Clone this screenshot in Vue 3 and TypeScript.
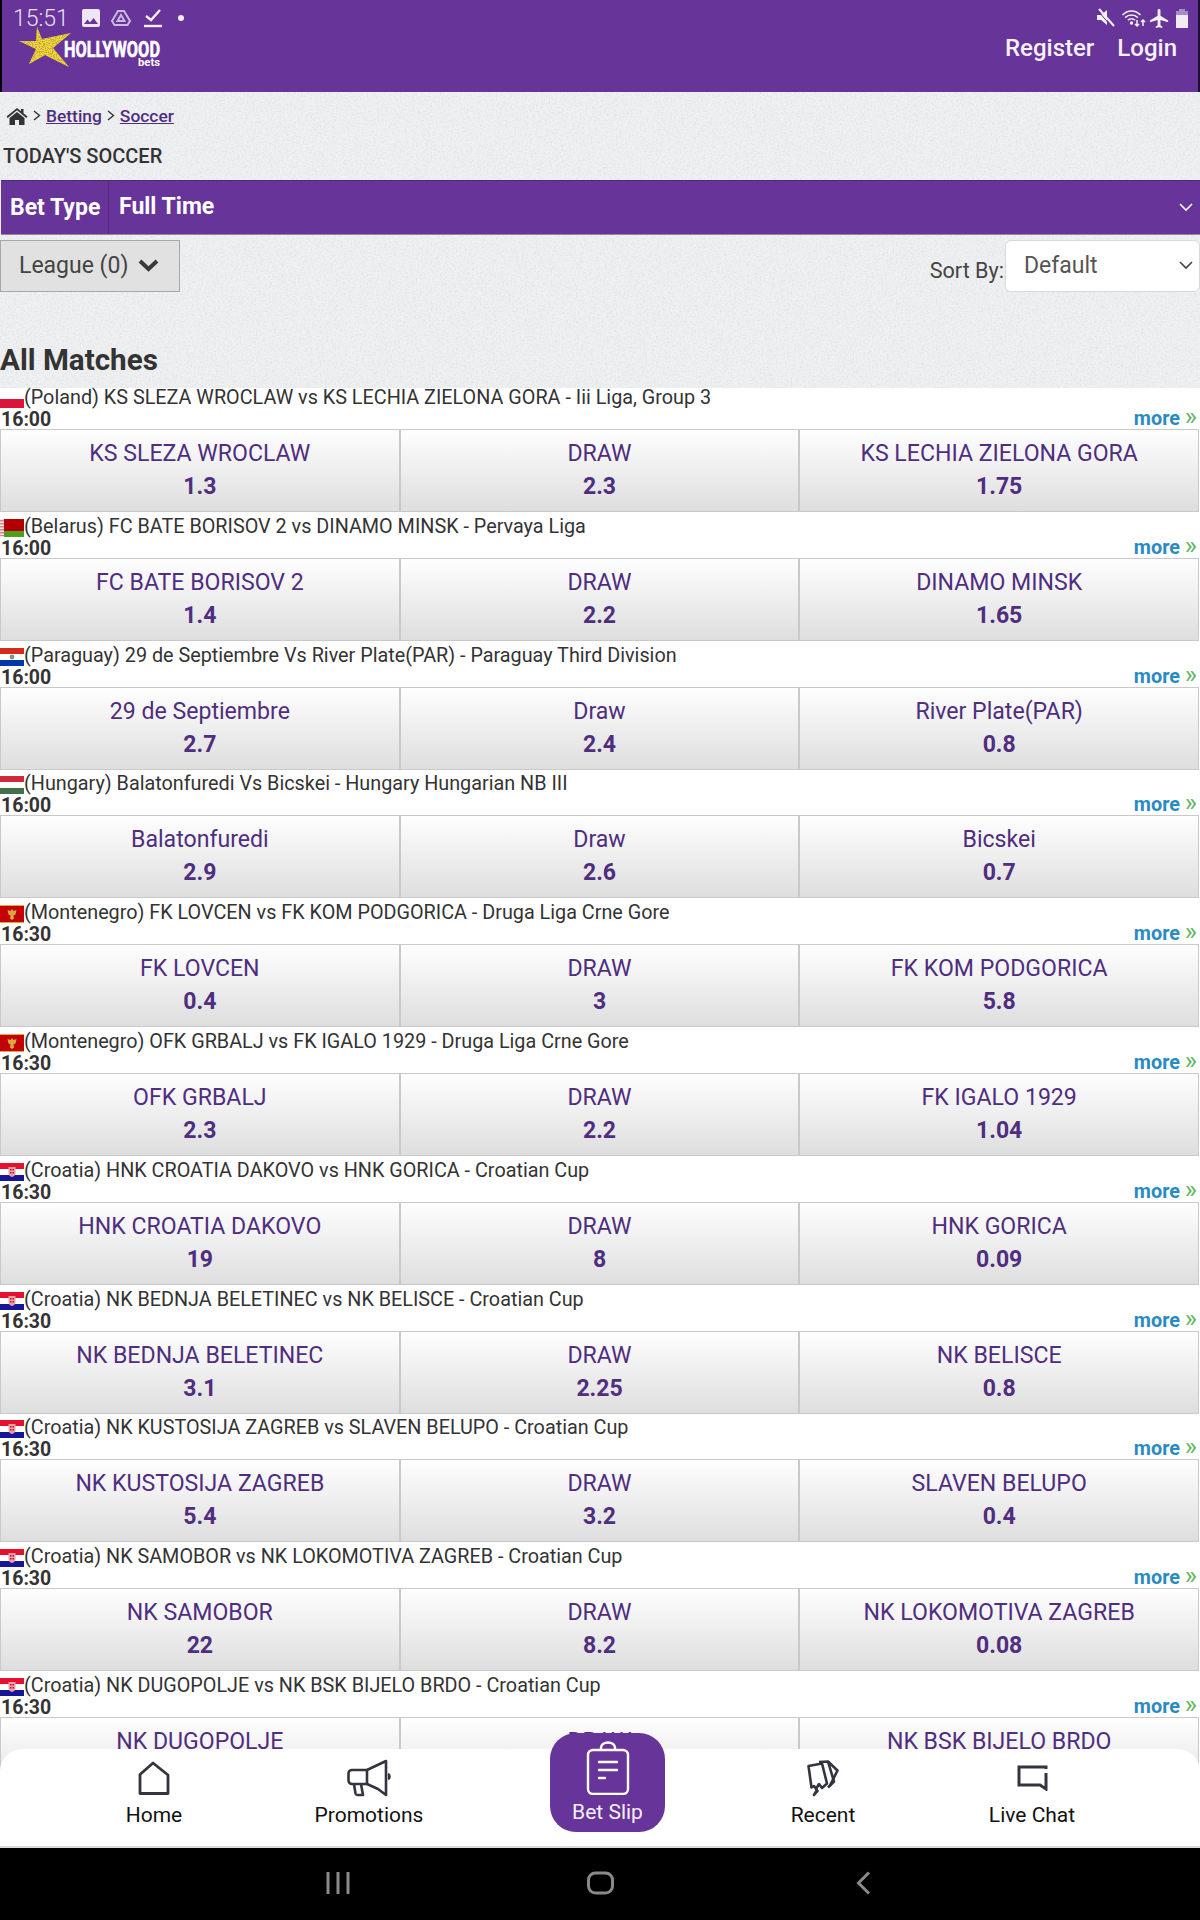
<script setup lang="ts">
interface Stripe { y: number; h: number; fill: string }
interface Match {
  country: string
  title: string
  time: string
  home: string
  draw: string
  away: string
  odds: [string, string, string]
}

const flags: Record<string, Stripe[]> = {
  Poland: [{ y: 0, h: 9, fill: '#ffffff' }, { y: 9, h: 9, fill: '#dc143c' }],
  Belarus: [{ y: 0, h: 12, fill: '#b20000' }, { y: 12, h: 6, fill: '#4f9e1f' }],
  Paraguay: [{ y: 0, h: 6, fill: '#d52b1e' }, { y: 6, h: 6, fill: '#ffffff' }, { y: 12, h: 6, fill: '#0038a8' }],
  Hungary: [{ y: 0, h: 6, fill: '#cd2a3e' }, { y: 6, h: 6, fill: '#ffffff' }, { y: 12, h: 6, fill: '#436f4d' }],
  Montenegro: [{ y: 0, h: 18, fill: '#d4af3a' }, { y: 1, h: 16, fill: '#c40308' }],
  Croatia: [{ y: 0, h: 6, fill: '#e8112d' }, { y: 6, h: 6, fill: '#ffffff' }, { y: 12, h: 6, fill: '#171796' }]
}

const matches: Match[] = [
  { country: 'Poland', title: 'KS SLEZA WROCLAW vs KS LECHIA ZIELONA GORA - Iii Liga, Group 3', time: '16:00', home: 'KS SLEZA WROCLAW', draw: 'DRAW', away: 'KS LECHIA ZIELONA GORA', odds: ['1.3', '2.3', '1.75'] },
  { country: 'Belarus', title: 'FC BATE BORISOV 2 vs DINAMO MINSK - Pervaya Liga', time: '16:00', home: 'FC BATE BORISOV 2', draw: 'DRAW', away: 'DINAMO MINSK', odds: ['1.4', '2.2', '1.65'] },
  { country: 'Paraguay', title: '29 de Septiembre Vs River Plate(PAR) - Paraguay Third Division', time: '16:00', home: '29 de Septiembre', draw: 'Draw', away: 'River Plate(PAR)', odds: ['2.7', '2.4', '0.8'] },
  { country: 'Hungary', title: 'Balatonfuredi Vs Bicskei - Hungary Hungarian NB III', time: '16:00', home: 'Balatonfuredi', draw: 'Draw', away: 'Bicskei', odds: ['2.9', '2.6', '0.7'] },
  { country: 'Montenegro', title: 'FK LOVCEN vs FK KOM PODGORICA - Druga Liga Crne Gore', time: '16:30', home: 'FK LOVCEN', draw: 'DRAW', away: 'FK KOM PODGORICA', odds: ['0.4', '3', '5.8'] },
  { country: 'Montenegro', title: 'OFK GRBALJ vs FK IGALO 1929 - Druga Liga Crne Gore', time: '16:30', home: 'OFK GRBALJ', draw: 'DRAW', away: 'FK IGALO 1929', odds: ['2.3', '2.2', '1.04'] },
  { country: 'Croatia', title: 'HNK CROATIA DAKOVO vs HNK GORICA - Croatian Cup', time: '16:30', home: 'HNK CROATIA DAKOVO', draw: 'DRAW', away: 'HNK GORICA', odds: ['19', '8', '0.09'] },
  { country: 'Croatia', title: 'NK BEDNJA BELETINEC vs NK BELISCE - Croatian Cup', time: '16:30', home: 'NK BEDNJA BELETINEC', draw: 'DRAW', away: 'NK BELISCE', odds: ['3.1', '2.25', '0.8'] },
  { country: 'Croatia', title: 'NK KUSTOSIJA ZAGREB vs SLAVEN BELUPO - Croatian Cup', time: '16:30', home: 'NK KUSTOSIJA ZAGREB', draw: 'DRAW', away: 'SLAVEN BELUPO', odds: ['5.4', '3.2', '0.4'] },
  { country: 'Croatia', title: 'NK SAMOBOR vs NK LOKOMOTIVA ZAGREB - Croatian Cup', time: '16:30', home: 'NK SAMOBOR', draw: 'DRAW', away: 'NK LOKOMOTIVA ZAGREB', odds: ['22', '8.2', '0.08'] },
  { country: 'Croatia', title: 'NK DUGOPOLJE vs NK BSK BIJELO BRDO - Croatian Cup', time: '16:30', home: 'NK DUGOPOLJE', draw: 'DRAW', away: 'NK BSK BIJELO BRDO', odds: ['', '', ''] }
]
</script>

<template>
  <div class="page">
    <svg class="texture" width="1200" height="388" aria-hidden="true">
      <filter id="paper" x="0" y="0" width="100%" height="100%">
        <feTurbulence type="fractalNoise" baseFrequency="0.55" numOctaves="3" seed="4" />
        <feColorMatrix type="matrix" values="0 0 0 0 0.7  0 0 0 0 0.71  0 0 0 0 0.73  0 0 0 1.4 -0.6" />
      </filter>
      <rect width="1200" height="388" filter="url(#paper)" />
    </svg>

    <header class="header">
      <div class="status">
        <div class="status-left">
          <span class="clock">15:51</span>
          <svg width="24" height="24" viewBox="0 0 24 24">
            <path fill-rule="evenodd" d="M21 19V5a2 2 0 0 0-2-2H5a2 2 0 0 0-2 2v14a2 2 0 0 0 2 2h14a2 2 0 0 0 2-2zM8.500 13.500l2.500 3 3.500-4.500 4.500 6H5z" fill="#eee6f5" />
          </svg>
          <svg width="22" height="20" viewBox="0 0 22 20" fill="none" stroke="#cdb9e0" stroke-width="2">
            <path d="M8 3h6l6 10-2.500 4h-13L2 13z" />
            <path d="M11 7l3.500 6h-7z" />
          </svg>
          <svg class="st-check" width="18" height="20" viewBox="0 0 18 20" fill="none" stroke="#f4eff8" stroke-width="2.400">
            <path d="M2 8l5 4 9-10" />
            <path d="M0 18h18" />
          </svg>
          <span class="st-dot"></span>
        </div>
        <div class="status-right">
          <svg width="20" height="20" viewBox="0 0 20 20">
            <path d="M1 7h4l6-5v15l-6-5H1z" fill="#f4eff8" />
            <path d="M3 1l15 17" stroke="#f4eff8" stroke-width="2" />
            <path d="M3 1l15 17" stroke="#67349a" stroke-width="1" transform="translate(-1.600 1.400)" />
          </svg>
          <svg width="26" height="20" viewBox="0 0 25 20" fill="none" stroke="#f4eff8" stroke-width="1.500">
            <path d="M1 7c5-5.500 13-5.500 18 0" />
            <path d="M3.600 9.600c3.600-3.600 9.200-3.600 12.800 0" />
            <path d="M6.400 12.200c2-2 5.200-2 7.200 0" />
            <circle cx="10" cy="15" r="1" fill="#f4eff8" />
            <path d="M15.500 12v6m-2-2l2 2 2-2M21.500 18v-6m-2 2l2-2 2 2" />
          </svg>
          <svg class="st-plane" width="23" height="23" viewBox="0 0 24 24">
            <path d="M21 16v-2l-8-5V3.500a1.500 1.500 0 0 0-3 0V9l-8 5v2l8-2.500V19l-2 1.500V22l3.500-1 3.500 1v-1.500L13 19v-5.500z" fill="#f4eff8" />
          </svg>
          <svg width="12" height="19" viewBox="0 0 12 19">
            <rect x="3" y="0" width="6" height="3" fill="#a78cc4" />
            <rect x="0" y="2" width="12" height="4" fill="#a78cc4" />
            <rect x="0" y="6" width="12" height="13" fill="#f1ebf6" />
          </svg>
        </div>
      </div>
      <div class="brand-row">
        <svg class="logo" width="200" height="44" viewBox="0 0 200 44">
          <defs>
            <filter id="speckle" x="0" y="0" width="100%" height="100%">
              <feTurbulence type="fractalNoise" baseFrequency="0.9" numOctaves="2" seed="7" result="n" />
              <feColorMatrix in="n" type="matrix" values="0 0 0 0 0.5  0 0 0 0 0.38  0 0 0 0 0.08  0 0 0 6 -2.7" result="dots" />
              <feComposite in="dots" in2="SourceGraphic" operator="in" result="clip" />
              <feMerge>
                <feMergeNode in="SourceGraphic" />
                <feMergeNode in="clip" />
              </feMerge>
            </filter>
          </defs>
          <polygon points="18,0 23,12 52,6 34,21 50,40 26,28 10,37 17,22 0,14 17,14" fill="#f6d92a" filter="url(#speckle)" />
          <text x="45" y="29.500" class="logo-main" textLength="96" lengthAdjust="spacingAndGlyphs">HOLLYWOOD</text>
          <text x="119" y="38.500" class="logo-sub" textLength="22" lengthAdjust="spacingAndGlyphs">bets</text>
        </svg>
        <nav class="auth">
          <a>Register</a>
          <a>Login</a>
        </nav>
      </div>
    </header>

    <main class="content">
      <div class="crumbs">
        <svg class="crumb-home" width="22" height="18" viewBox="0 0 22 18">
          <path d="M11 1L0.500 9.500l1.200 1.400L11 3.300l9.300 7.600 1.200-1.400-4-3.200V2h-2.500v2.300z" fill="#333" />
          <path d="M11 5L3.500 11v7h5.500v-5h4v5h5.500v-7z" fill="#333" />
        </svg>
        <svg width="8" height="14" viewBox="0 0 8 14" fill="none" stroke="#333" stroke-width="1.400"><path d="M1 2l5.500 4.500L1 11" /></svg>
        <a class="crumb-link">Betting</a>
        <svg width="8" height="14" viewBox="0 0 8 14" fill="none" stroke="#333" stroke-width="1.400"><path d="M1 2l5.500 4.500L1 11" /></svg>
        <a class="crumb-link">Soccer</a>
      </div>

      <h2 class="today">TODAY'S SOCCER</h2>

      <div class="bet-type">
        <span class="bet-type-label">Bet Type</span>
        <span class="bet-type-value">Full Time</span>
        <svg width="14" height="9" viewBox="0 0 14 9" fill="none" stroke="#fff" stroke-width="1.600"><path d="M1 1l6 6 6-6" /></svg>
      </div>

      <div class="filters">
        <button class="league">
          League (0)
          <svg width="21" height="14" viewBox="0 0 21 14" fill="none" stroke="#3a3a3a" stroke-width="4"><path d="M2 3l8.500 8L19 3" /></svg>
        </button>
        <div class="sort">
          <span class="sort-label">Sort By:</span>
          <div class="sort-select">
            Default
            <svg width="14" height="9" viewBox="0 0 14 9" fill="none" stroke="#444" stroke-width="1.600"><path d="M1 1l6 6 6-6" /></svg>
          </div>
        </div>
      </div>

      <h1 class="all">All Matches</h1>

      <section class="list">
        <article v-for="m in matches" :key="m.title" class="match">
          <div class="title-line">
            <svg class="flag" width="24" height="18" viewBox="0 0 24 18">
              <rect v-for="s in flags[m.country]" :key="s.y" x="0" :y="s.y" width="24" :height="s.h" :fill="s.fill" />
              <template v-if="m.country === 'Belarus'">
                <rect width="4" height="18" fill="#f3e9e9" />
                <path d="M1 1v16M3 1v16" stroke="#c0202a" stroke-width="1" stroke-dasharray="1.500 1.500" />
              </template>
              <circle v-if="m.country === 'Paraguay'" cx="12" cy="9" r="2.400" fill="#7d9a86" />
              <path v-if="m.country === 'Montenegro'" d="M12 4l1.500 2 3-1-1 4.500-2 1 .5 3-2 1.500-2-1.500.5-3-2-1-1-4.500 3 1z" fill="#d9a93c" />
              <template v-if="m.country === 'Croatia'">
                <path d="M8.500 4h7v6.500c0 2-1.800 3-3.500 3.500-1.700-.5-3.500-1.500-3.500-3.500z" fill="#e8a0a8" />
                <path d="M10 6h1.500v1.500H10zm2.500 0H14v1.500h-1.500zM10 9h1.500v1.500H10zm2.500 0H14v1.500h-1.500z" fill="#c8102e" />
              </template>
            </svg>
            <span class="title-text">({{ m.country }}) {{ m.title }}</span>
          </div>
          <div class="time-line">
            <span class="time">{{ m.time }}</span>
            <a class="more">more <span class="more-arrows">»</span></a>
          </div>
          <div class="odds-row">
            <div class="odd">
              <span class="odd-name">{{ m.home }}</span>
              <span class="odd-value">{{ m.odds[0] }}</span>
            </div>
            <div class="odd">
              <span class="odd-name">{{ m.draw }}</span>
              <span class="odd-value">{{ m.odds[1] }}</span>
            </div>
            <div class="odd">
              <span class="odd-name">{{ m.away }}</span>
              <span class="odd-value">{{ m.odds[2] }}</span>
            </div>
          </div>
        </article>
      </section>
    </main>

    <nav class="tabs">
      <a class="tab tab-home">
        <svg width="32" height="34" viewBox="0 0 32 34" fill="none" stroke="#33343f" stroke-width="2.800" stroke-linejoin="round">
          <path d="M2 13.500L15 2l15 12v18.500H2z" />
        </svg>
        <span>Home</span>
      </a>
      <a class="tab tab-promo">
        <svg width="44" height="38" viewBox="0 0 44 38" fill="none" stroke="#33343f" stroke-width="2.600" stroke-linejoin="round">
          <path d="M20 11H5a3.500 3.500 0 0 0-3.500 3.500v7A3.500 3.500 0 0 0 5 25h15z" />
          <path d="M20 11L39 2v34L31 30 20 25" />
          <path d="M41 15c2 1 2 4 0 5" fill="#33343f" />
          <path d="M7 25l1.500 9.500a2 2 0 0 0 2 1.500h5.500l-2-11" />
        </svg>
        <span>Promotions</span>
      </a>
      <a class="tab tab-slip">
        <svg width="44" height="54" viewBox="0 0 44 54" fill="none" stroke="#fff" stroke-width="2.400">
          <rect x="2" y="9" width="40" height="44" rx="5" />
          <path d="M15 9V6.500a7 5 0 0 1 14 0V9" />
          <path d="M12 21h20M12 29h20" />
          <path d="M12 37h8" />
        </svg>
        <span>Bet Slip</span>
      </a>
      <a class="tab tab-recent">
        <svg width="32" height="37" viewBox="0 0 32 37" fill="none" stroke="#33343f" stroke-width="2.600" stroke-linejoin="round">
          <path d="M1.500 6L15 3.500l5 20-5 4.500-3-4-3 5 1.500 2L7 35l3-5-3-4-2.500 1.500z" />
          <path d="M12 2l9-.5 6 20-6 6" />
          <path d="M21 1.500l9.500 9-8 16" />
        </svg>
        <span>Recent</span>
      </a>
      <a class="tab tab-chat">
        <svg width="31" height="26" viewBox="0 0 31 26" fill="none" stroke="#33343f" stroke-width="3" stroke-linejoin="miter">
          <path d="M29 4V2H2v18h21l6 4V8" />
        </svg>
        <span>Live Chat</span>
      </a>
    </nav>

    <footer class="android-nav">
      <svg width="24" height="24" viewBox="0 0 24 24" fill="none" stroke="#8a8a8a" stroke-width="3"><path d="M2 1v22M12 1v22M22 1v22" /></svg>
      <svg width="27" height="24" viewBox="0 0 27 24" fill="none" stroke="#8a8a8a" stroke-width="3"><rect x="1.500" y="2" width="24" height="20" rx="7" /></svg>
      <svg class="nav-back" width="15" height="24" viewBox="0 0 15 24" fill="none" stroke="#8a8a8a" stroke-width="3"><path d="M13 1.500L2.500 12 13 22.500" /></svg>
    </footer>
  </div>
</template>

<style>
html, body { margin: 0; background: #000; }
</style>

<style scoped>
.page {
  position: relative;
  width: 1200px;
  height: 1920px;
  overflow: hidden;
  display: flex;
  flex-direction: column;
  background: #eff0f1;
  font-family: Roboto, "Liberation Sans", sans-serif;
  color: #333;
}
.texture {
  position: absolute;
  left: 0;
  top: 0;
}
.header {
  position: relative;
  flex: none;
  height: 92px;
  background: #67349a;
  border-left: 2px solid #000;
  border-right: 2px solid #1c1030;
  box-sizing: border-box;
}
.status {
  height: 27px;
  display: flex;
  justify-content: space-between;
  align-items: center;
  padding: 9px 10px 0 11px;
  box-sizing: border-box;
}
.status-left, .status-right { display: flex; align-items: center; }
.status-left { gap: 7px; }
.status-right { gap: 5px; }
.clock {
  font-size: 23px;
  font-weight: 300;
  color: #e9e0f1;
  margin-right: 3px;
}
.st-check { margin-left: 5px; }
.st-plane { margin-left: -4px; }
.st-dot {
  width: 6px;
  height: 6px;
  margin-left: 9px;
  border-radius: 50%;
  background: #f4eff8;
}
.brand-row {
  display: flex;
  justify-content: space-between;
  padding-left: 17px;
  padding-right: 21px;
}
.logo { display: block; }
.logo-main {
  font: 700 22px Roboto, sans-serif;
  fill: #fff;
  stroke: #fff;
  stroke-width: 0.6px;
}
.logo-sub { font: 700 11px Roboto, sans-serif; fill: #fff; }
.auth {
  display: flex;
  gap: 23px;
  font-size: 24px;
  font-weight: 500;
  color: #f5f0f9;
  padding-top: 7px;
}
.content {
  position: relative;
  flex: 1;
  min-height: 0;
  overflow: hidden;
}
.crumbs {
  height: 47px;
  display: flex;
  align-items: center;
  padding-left: 6px;
  gap: 4px;
}
.crumb-home { margin-right: 1px; }
.crumb-link {
  font-size: 17.4px;
  font-weight: 500;
  color: #4f2d7f;
  text-decoration: underline;
  margin-left: 1px;
  margin-right: 1px;
}
.today {
  margin: 0;
  padding-left: 3px;
  height: 41px;
  line-height: 34px;
  font-size: 20px;
  font-weight: 500;
  color: #333;
}
.bet-type {
  height: 55px;
  margin-left: 1px;
  display: flex;
  align-items: center;
  background: #67349a;
  border-top: 1px solid #4e2a75;
  border-bottom: 1px solid #8d8d99;
  box-sizing: border-box;
  color: #fff;
  padding-right: 7px;
}
.bet-type-label {
  align-self: stretch;
  display: flex;
  align-items: center;
  width: 108px;
  box-sizing: border-box;
  padding-left: 9px;
  font-size: 23px;
  font-weight: 700;
  border-right: 1px solid #55297f;
}
.bet-type-value {
  flex: 1;
  padding-left: 10px;
  font-size: 23px;
  font-weight: 700;
  padding-bottom: 2px;
}
.filters {
  display: flex;
  justify-content: space-between;
  margin-top: 5px;
  height: 52px;
}
.league {
  width: 180px;
  height: 52px;
  box-sizing: border-box;
  background: #e1e1e1;
  border: 1px solid #a8a8a8;
  display: flex;
  align-items: center;
  gap: 10px;
  padding: 0 0 2px 18px;
  font: 400 23px Roboto, sans-serif;
  color: #444;
}
.sort {
  display: flex;
  align-items: center;
}
.sort-label {
  font-size: 21.6px;
  color: #444;
  padding-top: 9px;
  margin-right: 1px;
}
.sort-select {
  width: 195px;
  height: 52px;
  box-sizing: border-box;
  background: #fff;
  border: 1px solid #d8d8d8;
  border-radius: 6px;
  display: flex;
  align-items: center;
  justify-content: space-between;
  padding: 0 6px 2px 18px;
  font-size: 23px;
  color: #555;
}
.all {
  margin: 0;
  height: 96px;
  padding-top: 52px;
  box-sizing: border-box;
  font-size: 29.6px;
  font-weight: 700;
  line-height: 32px;
  color: #333;
}
.list { background: #fff; }
.match { height: 128.8px; }
.title-line {
  height: 20px;
  display: flex;
  align-items: flex-start;
}
.flag {
  flex: none;
  margin-top: 2px;
}
.title-text {
  font-size: 19.8px;
  line-height: 21px;
  margin-top: -1px;
  color: #333;
  white-space: nowrap;
}
.time-line {
  height: 21px;
  display: flex;
  justify-content: space-between;
  align-items: flex-end;
  line-height: 21px;
  padding-left: 1px;
  padding-right: 3px;
}
.time {
  font-size: 19.5px;
  line-height: 19px;
  font-weight: 700;
  color: #333;
}
.more {
  font-size: 19.8px;
  font-weight: 700;
  color: #2a8bc2;
}
.more-arrows {
  color: #62b55f;
  font-weight: 400;
  font-size: 26px;
  line-height: 0;
}
.odds-row {
  display: flex;
  padding-right: 1px;
}
.odd {
  flex: 1;
  height: 83px;
  box-sizing: border-box;
  border: 1px solid #c9c9c9;
  border-left-width: 1.500px;
  background: linear-gradient(#fefefe, #dedede);
  display: flex;
  flex-direction: column;
  align-items: center;
  color: #4f2d7f;
  padding-top: 10px;
}
.odd-name {
  font-size: 23.1px;
  line-height: 28px;
  white-space: nowrap;
}
.odd-value {
  margin-top: 5px;
  font-size: 23px;
  line-height: 28px;
  font-weight: 700;
}
.tabs {
  position: absolute;
  left: 0;
  right: 0;
  bottom: 72px;
  height: 99px;
  background: #fff;
  border-radius: 22px 22px 0 0;
  border-bottom: 2px solid #dcdcdc;
  box-sizing: border-box;
}
.tab {
  position: absolute;
  top: 0;
  width: 160px;
  display: flex;
  flex-direction: column;
  align-items: center;
  font-size: 21px;
  line-height: 24px;
  color: #111;
}
.tab span { margin-top: 8px; }
.tab-home { left: 74px; padding-top: 12px; }
.tab-promo { left: 289px; padding-top: 10px; }
.tab-promo span { margin-top: 6px; }
.tab-recent { left: 743px; padding-top: 11px; }
.tab-recent span { margin-top: 6px; }
.tab-chat { left: 952px; padding-top: 16px; }
.tab-chat span { margin-top: 12px; }
.tab-slip {
  left: 550px;
  top: -16px;
  width: 115px;
  height: 99px;
  padding-top: 8px;
  box-sizing: border-box;
  background: #67349a;
  border-radius: 26px;
  color: #f5f0f9;
}
.tab-slip span { margin-top: 4.5px; }
.android-nav {
  flex: none;
  height: 72px;
  background: #000;
  display: flex;
  align-items: center;
  position: relative;
  padding-left: 326px;
  padding-bottom: 2px;
  box-sizing: border-box;
  gap: 237px;
}
.nav-back { margin-left: 5px; }
</style>
